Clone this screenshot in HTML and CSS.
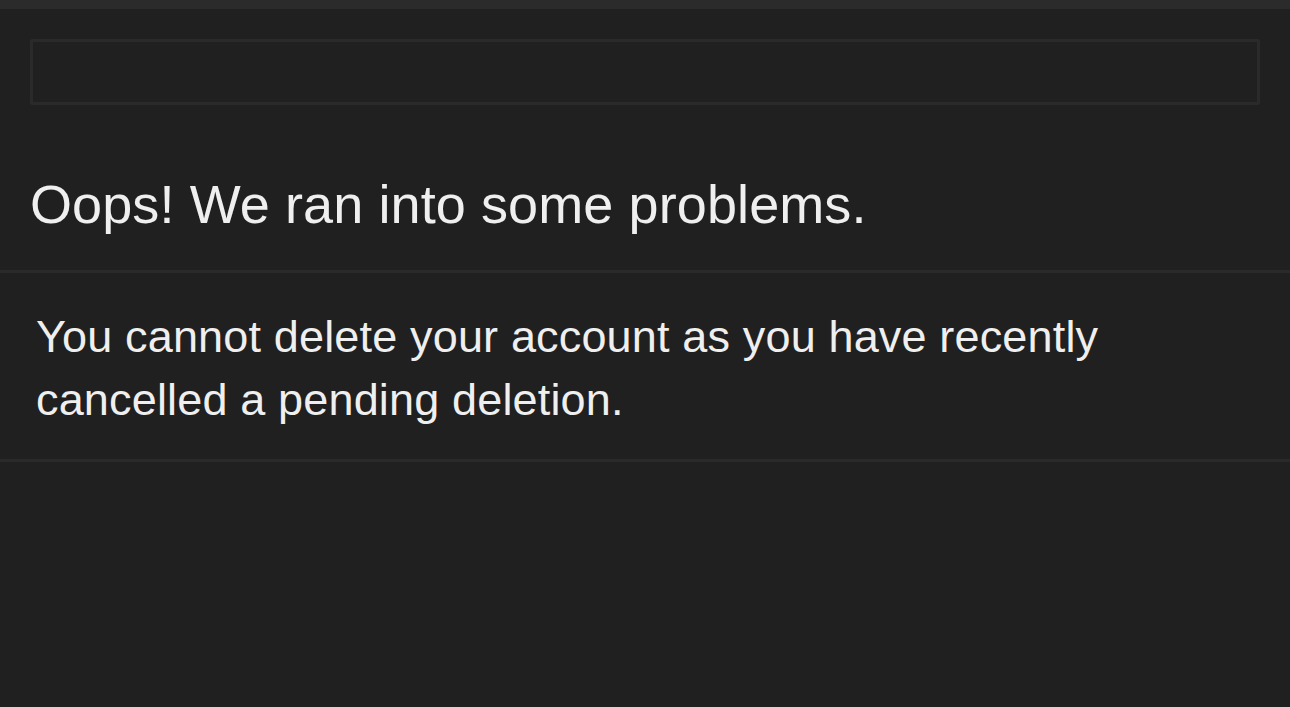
FILE: index.html
```html
<!DOCTYPE html>
<html lang="en">
  <head>
    <meta charset="utf-8" />
    <meta name="viewport" content="width=device-width, initial-scale=1.0" />
    <title>Error</title>
    <link rel="stylesheet" href="styles.css">
  </head>
  <body>
    <div class="topbar"></div>
    <div class="search-box"></div>
    <h1 class="error-title">Oops! We ran into some problems.</h1>
    <div class="error-body">
      You cannot delete your account as you have recently<br>
      cancelled a pending deletion.
    </div>
  </body>
</html>
```

FILE: styles.css
```css
body, html {
  margin: 0;
  padding: 0;
  background-color: #202020;
  color: #efefef;
  font-family: "Liberation Sans", "Helvetica", "Arial", sans-serif;
}
.topbar {
  height: 9px;
  background-color: #2b2b2b;
}
.search-box {
  margin: 30px 30px 0 30px;
  height: 66px;
  box-sizing: border-box;
  border: 3px solid #2a2a2a;
  border-radius: 2px;
}
.error-title {
  margin: 67px 0 0 0;
  padding: 0 30px 33px 30px;
  font-size: 54px;
  font-weight: normal;
  line-height: 65px;
  letter-spacing: 0.1px;
  border-bottom: 3px solid #2a2a2a;
}
.error-body {
  padding: 32px 36px 28px 36px;
  font-size: 45px;
  line-height: 63px;
  letter-spacing: 0.16px;
  border-bottom: 3px solid #2a2a2a;
}
```
